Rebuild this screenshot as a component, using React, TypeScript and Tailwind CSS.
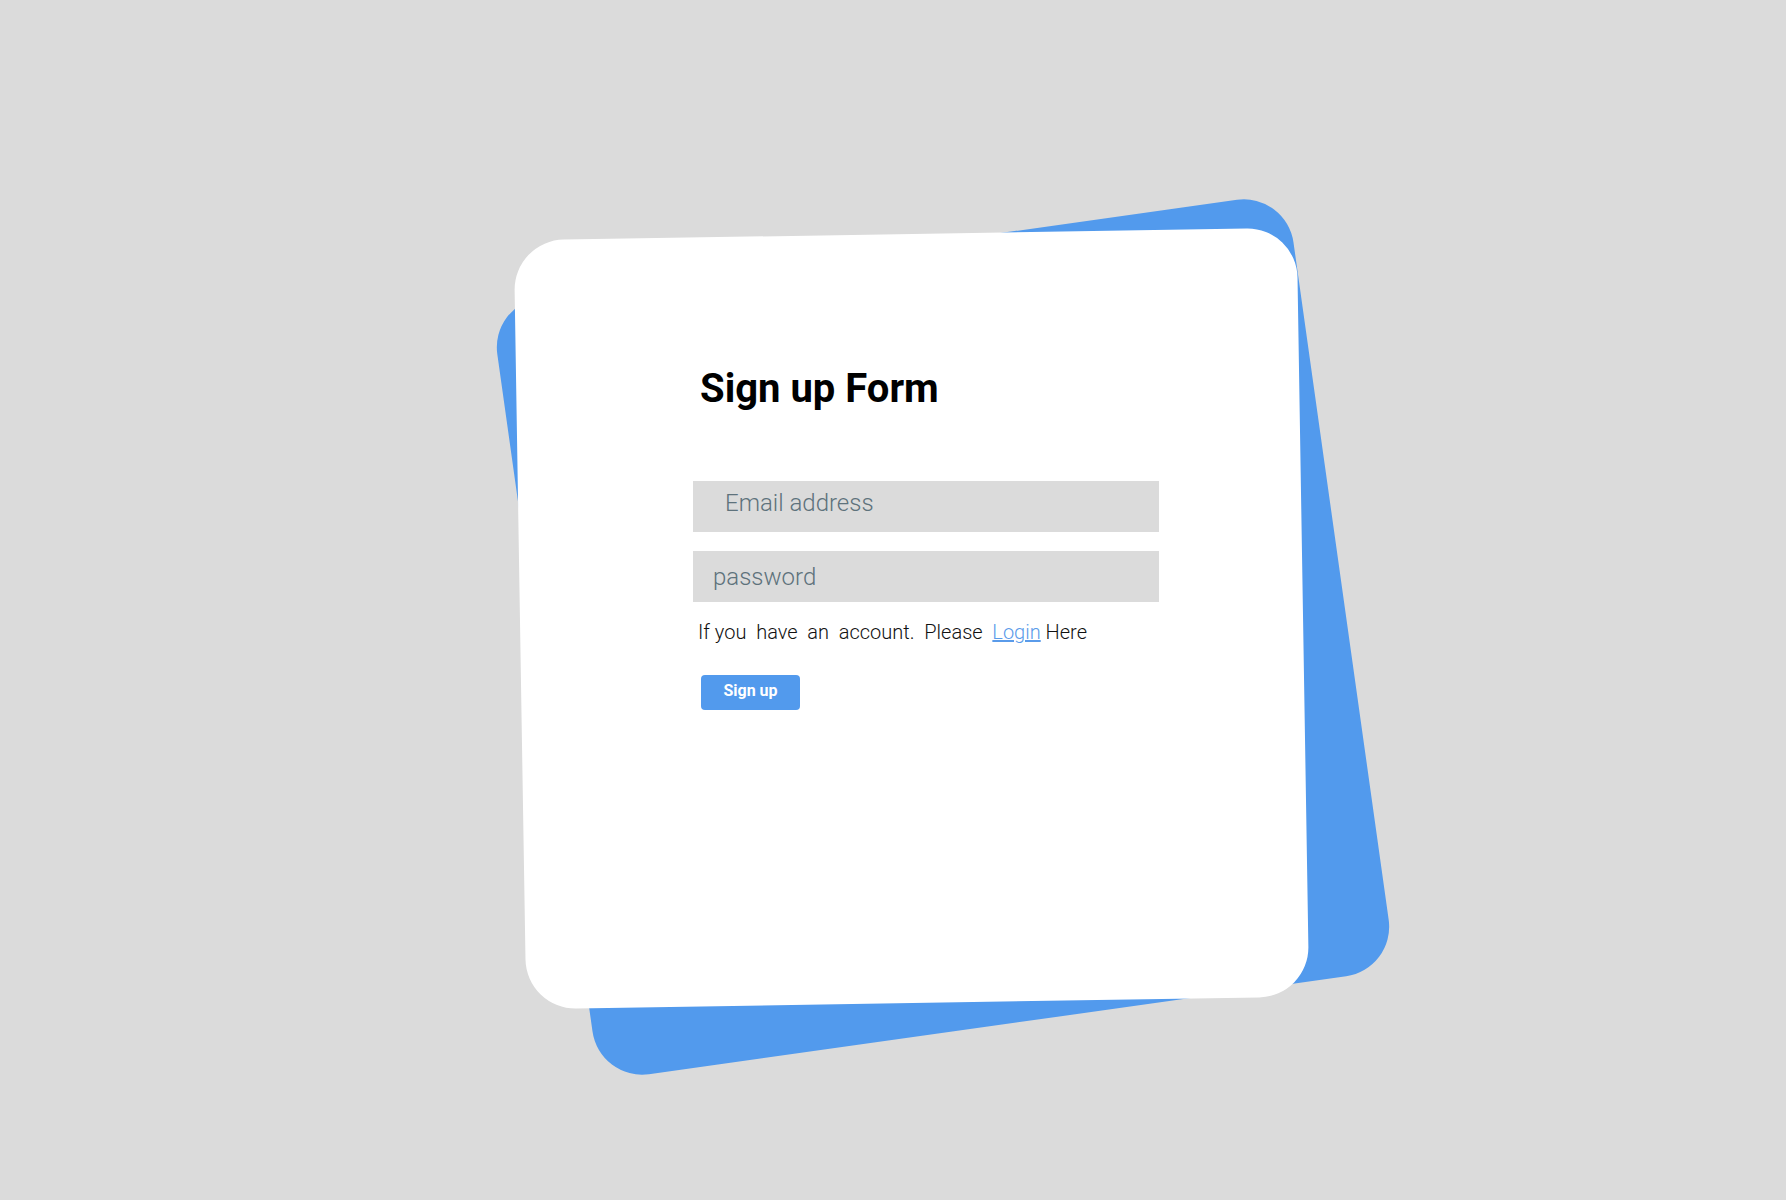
import React from "react";

const SignupCard = () => {
    return (
        <div className="relative w-[783px] h-[769px]">
            {/* back layer */}
            <div className="absolute left-[21px] top-[11px] w-[804px] h-[784px] rounded-[50px] bg-[#529aed] rotate-[-8deg]"></div>
            {/* front layer */}
            <div className="absolute inset-0 rounded-[50px] bg-white rotate-[-0.93deg]"></div>

            <form className="relative flex flex-col items-start pt-[135.5px] pl-[173.5px]">
                <h1 className="ml-[7px] text-[40px] leading-[40px] font-bold text-black">Sign up Form</h1>

                <input
                    type="email"
                    placeholder="Email address"
                    className="mt-[72px] w-[466px] h-[51px] border-0 shadow-none appearance-none pl-[32px] pb-[8px] bg-[#dbdbdb] text-[24px] font-light text-[#5e727c] placeholder:text-[#5e727c] outline-none"
                />
                <input
                    type="password"
                    placeholder="password"
                    className="mt-[19px] w-[466px] h-[51px] border-0 shadow-none appearance-none pl-[20px] bg-[#dbdbdb] text-[24px] font-light text-[#5e727c] placeholder:text-[#5e727c] outline-none"
                />

                <p className="mt-[18px] ml-[5px] text-[20px] leading-[24px] font-light text-[#111] whitespace-pre">
                    {"If you\u00a0 have\u00a0 an\u00a0 account.\u00a0 Please\u00a0 "}
                    <a href="#" className="text-[#5a9bea] underline">Login</a>
                    {" Here"}
                </p>

                <button
                    type="button"
                    className="mt-[31px] ml-[8px] w-[99px] h-[35px] pb-[4px] rounded-[4px] bg-[#529aed] text-white text-[16px] font-bold"
                >
                    Sign up
                </button>
            </form>
        </div>
    );
};

export default function App() {
    return (
        <div className="h-screen w-full overflow-hidden bg-[#dbdbdb] flex items-center justify-center pl-[36px] pt-[36px] font-[family-name:Roboto,sans-serif]">
            <SignupCard />
        </div>
    );
}
